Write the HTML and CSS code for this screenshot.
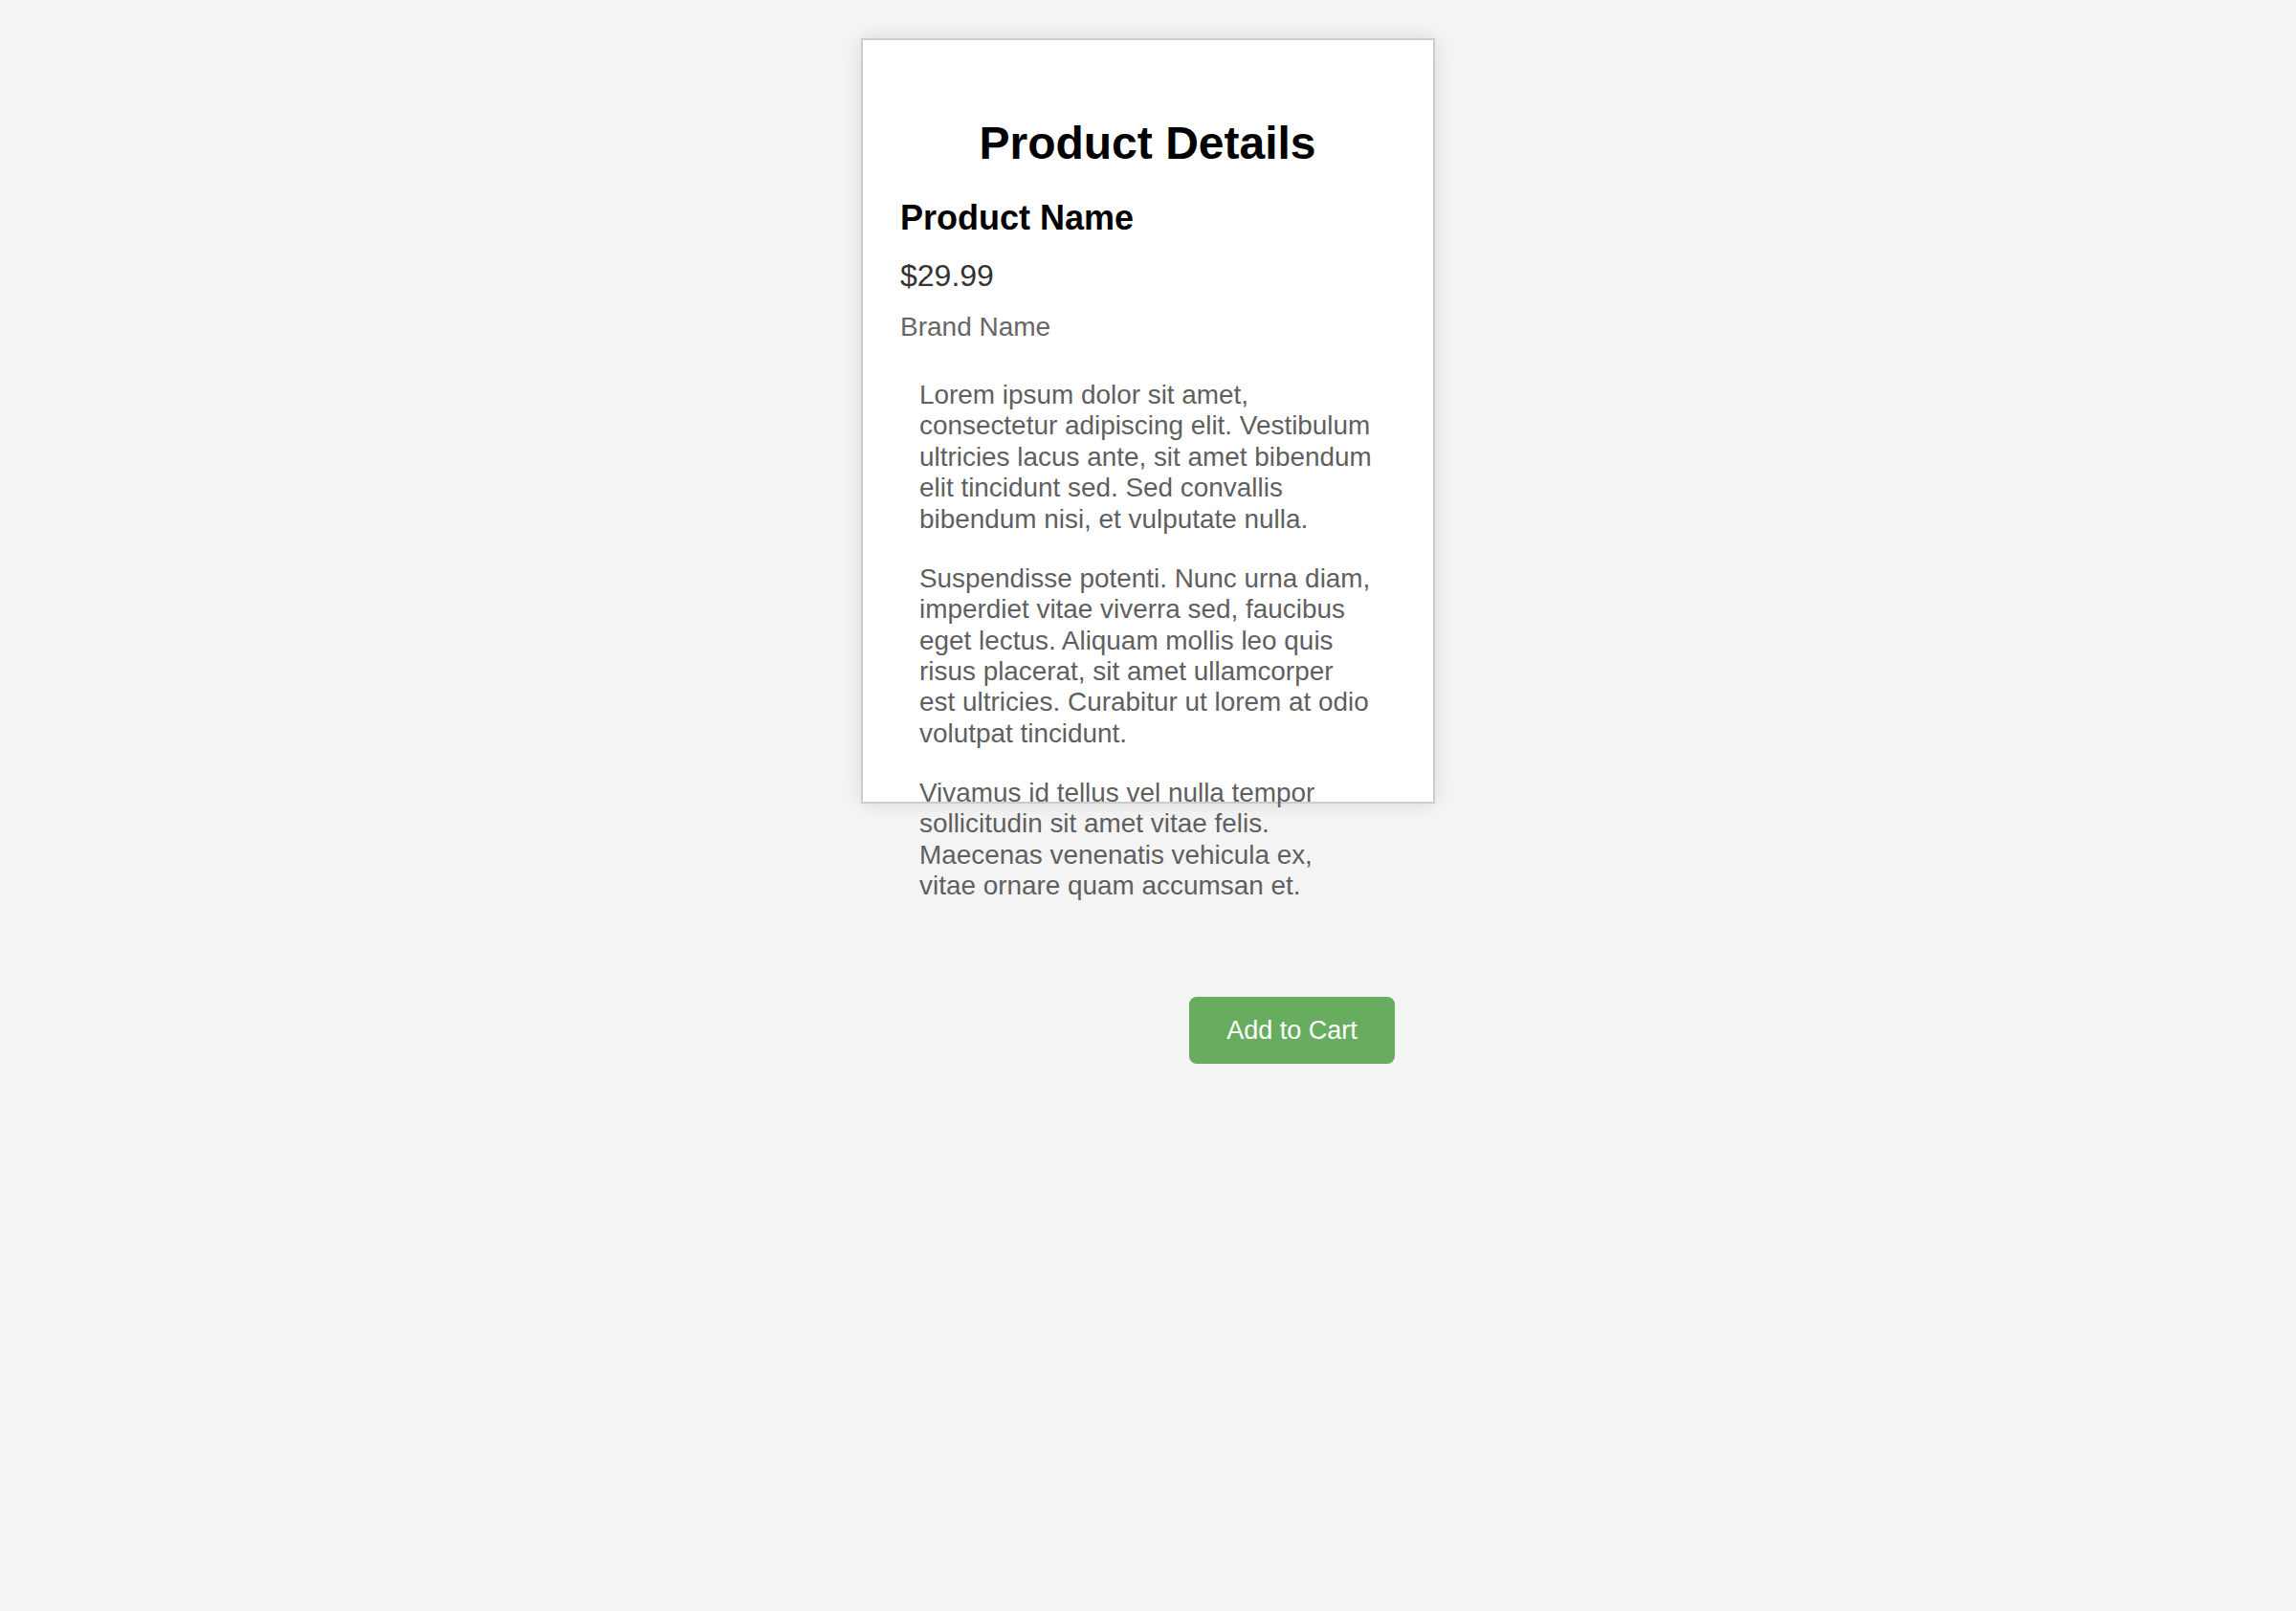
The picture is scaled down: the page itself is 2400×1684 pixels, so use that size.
FILE: index.html
```html
<!DOCTYPE html>
<html lang="en">
<head>
<meta charset="utf-8">
<title>Product Details</title>
<link rel="stylesheet" href="styles.css">
</head>
<body>
  <div class="card">
    <h1 class="title">Product Details</h1>
    <h2 class="product-name">Product Name</h2>
    <div class="price">$29.99</div>
    <div class="brand">Brand Name</div>
    <div class="description">
      <p>Lorem ipsum dolor sit amet,<br>consectetur adipiscing elit. Vestibulum<br>ultricies lacus ante, sit amet bibendum<br>elit tincidunt sed. Sed convallis<br>bibendum nisi, et vulputate nulla.</p>
      <p>Suspendisse potenti. Nunc urna diam,<br>imperdiet vitae viverra sed, faucibus<br>eget lectus. Aliquam mollis leo quis<br>risus placerat, sit amet ullamcorper<br>est ultricies. Curabitur ut lorem at odio<br>volutpat tincidunt.</p>
      <p>Vivamus id tellus vel nulla tempor<br>sollicitudin sit amet vitae felis.<br>Maecenas venenatis vehicula ex,<br>vitae ornare quam accumsan et.</p>
    </div>
    <div class="actions">
      <button class="add-to-cart" type="button">Add to Cart</button>
    </div>
  </div>
</body>
</html>
```
FILE: styles.css
```css
html, body {
  margin: 0;
  padding: 0;
}

body {
  background: #f4f4f4;
  font-family: "Liberation Sans", Arial, Helvetica, sans-serif;
  color: #000;
}

/* The card keeps a fixed 800px frame while its content runs past it */
.card {
  position: relative;
  isolation: isolate;
  box-sizing: border-box;
  width: 600px;
  margin: 40px auto 0;
  padding: 82px 42px 0 41px;
}

.card::before {
  content: "";
  position: absolute;
  top: 0;
  left: 0;
  right: 0;
  height: 800px;
  box-sizing: border-box;
  background: #fff;
  border: 2px solid #cccccc;
  box-shadow: 0 0 18px rgba(0, 0, 0, 0.11);
  z-index: -1;
}

.title {
  margin: 0;
  font-size: 48px;
  line-height: 56px;
  font-weight: bold;
  text-align: center;
  color: #000;
}

.product-name {
  margin: 29px 0 0;
  font-size: 36px;
  line-height: 42px;
  font-weight: bold;
  color: #000;
}

.price {
  margin-top: 21px;
  font-size: 32px;
  line-height: 36px;
  color: #333;
}

.brand {
  margin-top: 20px;
  font-size: 28px;
  line-height: 31px;
  color: #666;
}

.description {
  margin-top: 40px;
  padding: 0 20px;
}

.description p {
  margin: 0 0 29.8px;
  font-size: 27.9px;
  line-height: 32.4px;
  color: #5f5f5f;
  white-space: nowrap;
}

.description p:last-child {
  margin-bottom: 0;
}

.actions {
  margin-top: 99px;
  display: flex;
  justify-content: flex-end;
}

.add-to-cart {
  box-sizing: border-box;
  width: 215px;
  height: 70px;
  padding: 0;
  border: none;
  border-radius: 8px;
  background: #68ad5f;
  color: #fff;
  font-family: "Liberation Sans", Arial, Helvetica, sans-serif;
  font-size: 27px;
  line-height: 70px;
  text-align: center;
  cursor: pointer;
}
```
